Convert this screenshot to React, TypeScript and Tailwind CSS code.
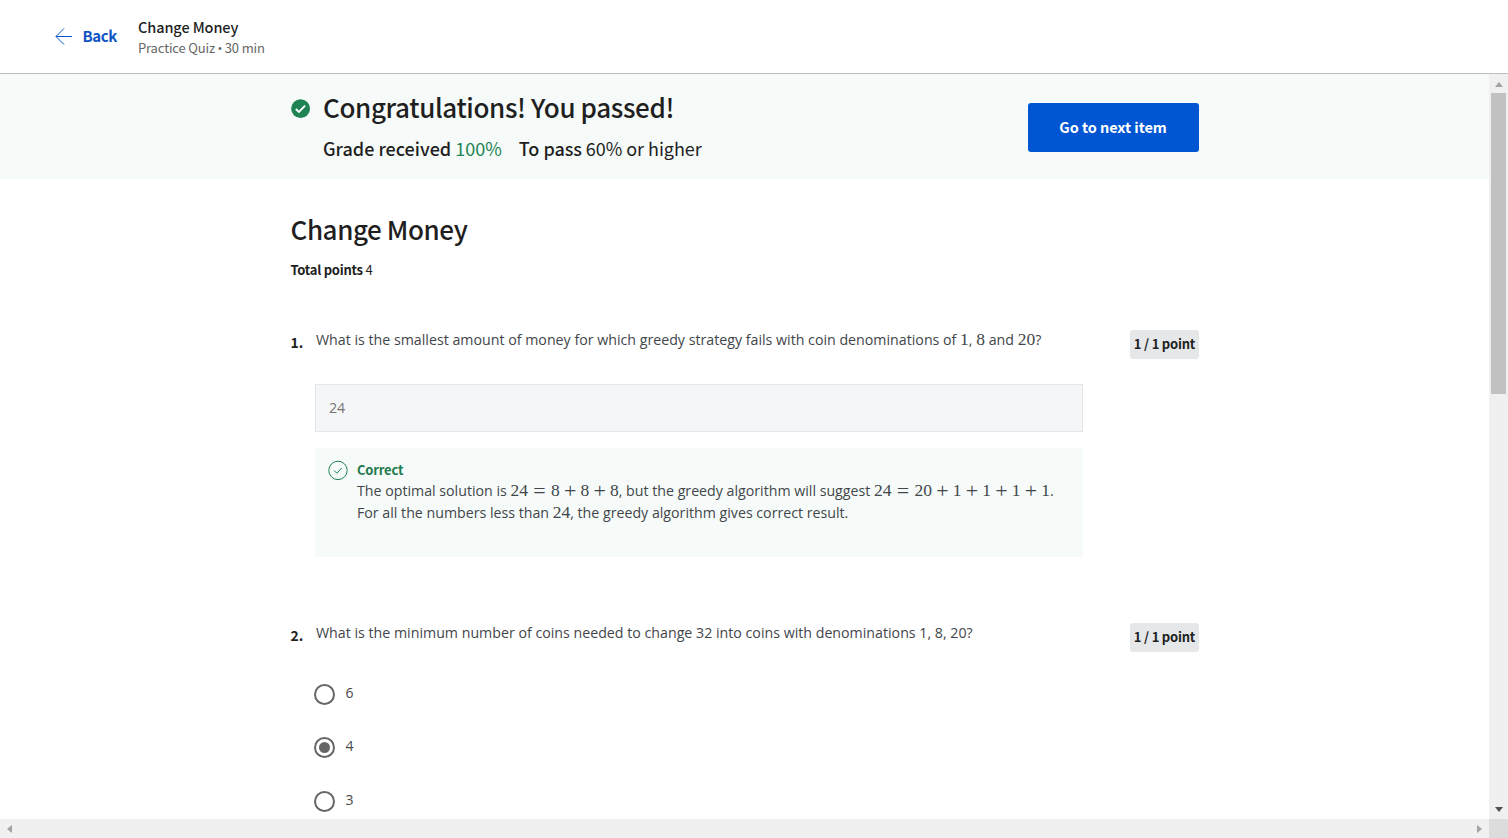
import type { ReactNode } from "react";

const heading = "font-['Noto_Sans_CJK_SC',sans-serif] whitespace-nowrap";

function M({ children }: { children: ReactNode }) {
  return <span className="font-['Liberation_Serif',serif] text-[17.5px] leading-[0]">{children}</span>;
}

function Eq() {
  return <span className="mx-[4.9px] inline-block w-[13.2px] text-center align-[-1.5px] text-[22px] leading-[0]">=</span>;
}

function Plus() {
  return <span className="mx-[3.8px] inline-block w-[13.2px] text-center align-[-1.5px] text-[22px] leading-[0]">+</span>;
}

function Points() {
  return (
    <div className={`${heading} flex h-[29px] w-[69px] justify-center rounded-[3px] bg-[#e5e7e8] text-[13px] font-bold leading-[28px] tracking-[-0.2px] text-[#1f1f1f]`}>
      1 / 1 point
    </div>
  );
}

function Option({ label, checked = false }: { label: string; checked?: boolean }) {
  return (
    <div className="flex h-[53.4px] items-start">
      <span className="ml-[-2px] flex h-[21px] w-[21px] items-center justify-center rounded-full border-2 border-[#666]">
        {checked && <span className="h-[11px] w-[11px] rounded-full bg-[#666]" />}
      </span>
      <span className="ml-[10.5px] text-[14px] leading-[18px] text-[#4a4a4a]">{label}</span>
    </div>
  );
}

export default function App() {
  return (
    <div className="flex h-[838px] w-[1508px] flex-col overflow-hidden bg-white font-['Open_Sans',sans-serif] text-[#42464a]">
      <header className="flex h-[74px] shrink-0 items-start border-b border-[#bdbdbd] pl-[55px]">
        <svg className="mt-[28px] h-[17px] w-[17px]" viewBox="0 0 17 17" fill="none" stroke="#0056d2" strokeWidth="1">
          <path d="M17 8.5H1M9 .5L1 8.5l8 8" />
        </svg>
        <span className={`${heading} ml-[10.5px] mt-[25px] w-[55.5px] text-[15px] font-bold leading-[22px] tracking-[-0.4px] text-[#0f56c4]`}>Back</span>
        <div className={`${heading} mt-[17px]`}>
          <div className="text-[14.5px] font-medium leading-[20px] tracking-[-0.1px] text-[#1f1f1f]">Change Money</div>
          <div className="mt-px flex text-[13px] leading-[20px] tracking-[-0.15px] text-[#666]">
            <span>Practice Quiz</span>
            <span className="mx-[2.5px] font-['Open_Sans',sans-serif] text-[13px]">•</span>
            <span>30 min</span>
          </div>
        </div>
      </header>
      <div className="flex min-h-0 flex-1">
        <div className="flex min-w-0 flex-1 flex-col">
          <main className="min-h-0 flex-1 overflow-hidden">
            <section className="flex h-[105px] items-start bg-[#f6fbf9] pl-[290.5px]">
              <svg className="mt-[25px] h-[20px] w-[20px]" viewBox="0 0 20 20">
                <circle cx="9.6" cy="9.7" r="9.4" fill="#1f8354" />
                <path d="M4.8 10l3.1 3 6.2-6.3" fill="none" stroke="#fff" strokeWidth="1.9" />
              </svg>
              <div className={`${heading} ml-[12.5px] w-[704.5px] text-[#1f1f1f]`}>
                <h1 className="mt-[13px] text-[26px] font-medium leading-[40px] tracking-[-0.37px]">Congratulations! You passed!</h1>
                <div className="mt-[7px] flex gap-[17px] text-[18px] leading-[28px]">
                  <span><span className="font-medium">Grade received</span> <span className="text-[#1f8354]">100%</span></span>
                  <span className="tracking-[-0.05px]"><span className="font-medium">To pass</span> 60% or higher</span>
                </div>
              </div>
              <button className={`${heading} mt-[29px] h-[49px] w-[171px] rounded-[3px] bg-[#0056d2] pb-[2px] text-[14.5px] font-bold tracking-[-0.05px] text-white`}>
                Go to next item
              </button>
            </section>
            <section className="w-[1199px] pl-[291px]">
              <h2 className={`${heading} ml-[-0.5px] pt-[30px] text-[26px] font-medium leading-[40px] tracking-[-0.42px] text-[#1f1f1f]`}>Change Money</h2>
              <div className={`${heading} ml-[-0.5px] mt-[11px] h-[20px] text-[13px] leading-[20px] tracking-[-0.25px] text-[#1f1f1f]`}>
                <span className="font-bold">Total points</span> 4
              </div>
              <div className="mt-[50px] flex h-[293px] items-start">
                <span className={`${heading} ml-[-0.5px] mt-px w-[25.5px] text-[14px] font-bold leading-[22px] text-[#1f1f1f]`}>1.</span>
                <div className="w-[814px]">
                  <p className="h-[22px] whitespace-nowrap text-[14.21px] leading-[20px]">
                    What is the smallest amount of money for which greedy strategy fails with coin denominations of <M>1</M>, <M>8</M> and <M>20</M>?
                  </p>
                  <div className="-ml-px mt-[32px] flex h-[48px] w-[768px] items-center border border-[#e4e7ea] bg-[#f5f6f8] pb-px pl-[13px] text-[14.2px] text-[#757575]">24</div>
                  <div className="-ml-px mt-[16px] flex h-[109px] w-[768px] items-start bg-[#f6fbf9] pl-[13px]">
                    <svg className="mt-[12px] h-[20px] w-[20px]" viewBox="0 0 20 20" fill="none" stroke="#1f8354">
                      <circle cx="10" cy="10.4" r="9.2" strokeWidth="1" />
                      <path d="M6.2 10.6l2.7 2.7 4.8-5.4" strokeWidth="1" />
                    </svg>
                    <div className="ml-[9px] mt-[12px] whitespace-nowrap text-[14.2px]">
                      <div className={`${heading} h-[20px] text-[13px] font-bold leading-[20px] tracking-[-0.2px] text-[#1f7a4d]`}>Correct</div>
                      <p className="h-[21.5px] leading-[21px]">
                        The optimal solution is <M>24<Eq />8<Plus />8<Plus />8</M>, but the greedy algorithm will suggest <M>24<Eq />20<Plus />1<Plus />1<Plus />1<Plus />1</M>.
                      </p>
                      <p className="h-[21px] leading-[21px]">
                        For all the numbers less than <M>24</M>, the greedy algorithm gives correct result.
                      </p>
                    </div>
                  </div>
                </div>
                <Points />
              </div>
              <div className="flex items-start">
                <span className={`${heading} ml-[-0.5px] mt-px w-[25.5px] text-[14px] font-bold leading-[22px] text-[#1f1f1f]`}>2.</span>
                <div className="w-[814px]">
                  <p className="h-[22px] whitespace-nowrap text-[14.21px] leading-[20px]">
                    What is the minimum number of coins needed to change 32 into coins with denominations 1, 8, 20?
                  </p>
                  <div className="mt-[39px]">
                    <Option label="6" />
                    <Option label="4" checked />
                    <Option label="3" />
                  </div>
                </div>
                <Points />
              </div>
            </section>
          </main>
          <div className="flex h-[19px] shrink-0 items-center justify-between bg-[#f0f0f0] px-[7px]">
            <svg className="h-[8px] w-[5px]" viewBox="0 0 5 8"><path d="M5 0v8L0 4z" fill="#a3a3a3" /></svg>
            <svg className="h-[8px] w-[5px]" viewBox="0 0 5 8"><path d="M0 0v8l5-4z" fill="#a3a3a3" /></svg>
          </div>
        </div>
        <div className="flex w-[19px] shrink-0 flex-col items-center bg-[#f0f0f0]">
          <svg className="mt-[8px] h-[5px] w-[8px]" viewBox="0 0 8 5"><path d="M0 5h8L4 0z" fill="#a3a3a3" /></svg>
          <div className="mt-[6px] h-[301px] w-[15px] bg-[#c1c1c1]" />
          <svg className="mt-auto mb-[7px] h-[5px] w-[8px]" viewBox="0 0 8 5"><path d="M0 0h8L4 5z" fill="#505050" /></svg>
          <div className="h-[19px] w-full bg-[#dcdcdc]" />
        </div>
      </div>
    </div>
  );
}
